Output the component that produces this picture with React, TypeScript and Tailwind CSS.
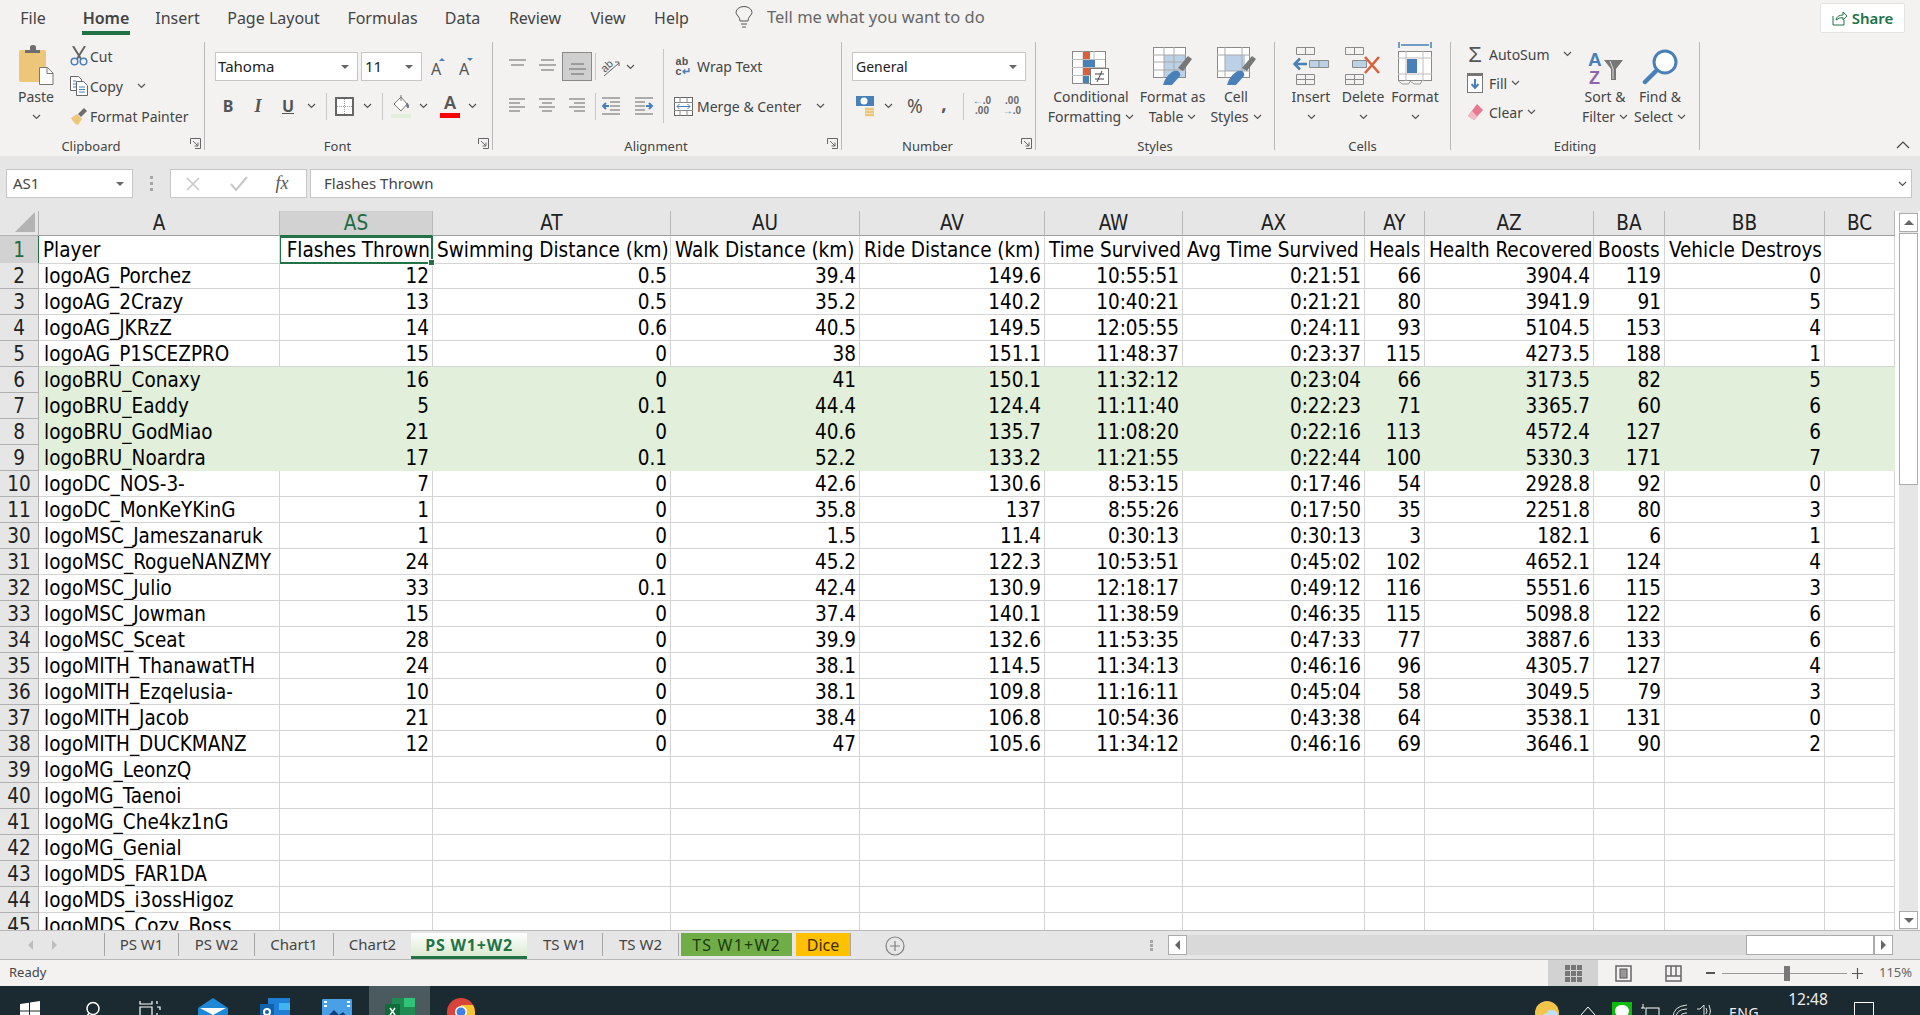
import type { ReactNode } from 'react'

const COL_CLASS = 'grid grid-cols-[39px_241px_153px_238px_189px_185px_138px_182px_60px_169px_71px_160px_70px]'

const HEADERS = ['A', 'AS', 'AT', 'AU', 'AV', 'AW', 'AX', 'AY', 'AZ', 'BA', 'BB', 'BC']
const TITLES = ['Player', 'Flashes Thrown', 'Swimming Distance (km)', 'Walk Distance (km)', 'Ride Distance (km)', 'Time Survived', 'Avg Time Survived', 'Heals', 'Health Recovered', 'Boosts', 'Vehicle Destroys', '']

const ROWS: [number, string, ...string[]][] = [
  [2, 'logoAG_Porchez', '12', '0.5', '39.4', '149.6', '10:55:51', '0:21:51', '66', '3904.4', '119', '0'],
  [3, 'logoAG_2Crazy', '13', '0.5', '35.2', '140.2', '10:40:21', '0:21:21', '80', '3941.9', '91', '5'],
  [4, 'logoAG_JKRzZ', '14', '0.6', '40.5', '149.5', '12:05:55', '0:24:11', '93', '5104.5', '153', '4'],
  [5, 'logoAG_P1SCEZPRO', '15', '0', '38', '151.1', '11:48:37', '0:23:37', '115', '4273.5', '188', '1'],
  [6, 'logoBRU_Conaxy', '16', '0', '41', '150.1', '11:32:12', '0:23:04', '66', '3173.5', '82', '5'],
  [7, 'logoBRU_Eaddy', '5', '0.1', '44.4', '124.4', '11:11:40', '0:22:23', '71', '3365.7', '60', '6'],
  [8, 'logoBRU_GodMiao', '21', '0', '40.6', '135.7', '11:08:20', '0:22:16', '113', '4572.4', '127', '6'],
  [9, 'logoBRU_Noardra', '17', '0.1', '52.2', '133.2', '11:21:55', '0:22:44', '100', '5330.3', '171', '7'],
  [10, 'logoDC_NOS-3-', '7', '0', '42.6', '130.6', '8:53:15', '0:17:46', '54', '2928.8', '92', '0'],
  [11, 'logoDC_MonKeYKinG', '1', '0', '35.8', '137', '8:55:26', '0:17:50', '35', '2251.8', '80', '3'],
  [30, 'logoMSC_Jameszanaruk', '1', '0', '1.5', '11.4', '0:30:13', '0:30:13', '3', '182.1', '6', '1'],
  [31, 'logoMSC_RogueNANZMY', '24', '0', '45.2', '122.3', '10:53:51', '0:45:02', '102', '4652.1', '124', '4'],
  [32, 'logoMSC_Julio', '33', '0.1', '42.4', '130.9', '12:18:17', '0:49:12', '116', '5551.6', '115', '3'],
  [33, 'logoMSC_Jowman', '15', '0', '37.4', '140.1', '11:38:59', '0:46:35', '115', '5098.8', '122', '6'],
  [34, 'logoMSC_Sceat', '28', '0', '39.9', '132.6', '11:53:35', '0:47:33', '77', '3887.6', '133', '6'],
  [35, 'logoMITH_ThanawatTH', '24', '0', '38.1', '114.5', '11:34:13', '0:46:16', '96', '4305.7', '127', '4'],
  [36, 'logoMITH_Ezqelusia-', '10', '0', '38.1', '109.8', '11:16:11', '0:45:04', '58', '3049.5', '79', '3'],
  [37, 'logoMITH_Jacob', '21', '0', '38.4', '106.8', '10:54:36', '0:43:38', '64', '3538.1', '131', '0'],
  [38, 'logoMITH_DUCKMANZ', '12', '0', '47', '105.6', '11:34:12', '0:46:16', '69', '3646.1', '90', '2'],
  [39, 'logoMG_LeonzQ'],
  [40, 'logoMG_Taenoi'],
  [41, 'logoMG_Che4kz1nG'],
  [42, 'logoMG_Genial'],
  [43, 'logoMDS_FAR1DA'],
  [44, 'logoMDS_i3ossHigoz'],
  [45, 'logoMDS_Cozy_Boss'],
]

function Chev({ className = '' }: { className?: string }) {
  return (
    <svg width="9" height="6" viewBox="0 0 9 6" className={`shrink-0 ${className}`} fill="none" stroke="#555" strokeWidth="1.2">
      <path d="M1 1l3.5 3.5L8 1" />
    </svg>
  )
}

function Caret() {
  return <div className="h-0 w-0 border-x-[4px] border-t-[4px] border-x-transparent border-t-[#666]" />
}

function Launcher() {
  return (
    <svg width="11" height="11" viewBox="0 0 11 11" className="absolute bottom-[1px] right-[3px]" fill="none" stroke="#666">
      <path d="M.5 6V.5H10.5V10.5H5" />
      <path d="M3 3l5 5M8 4.5V8H4.5" />
    </svg>
  )
}

function Group({ className, label, launcher, children }: { className: string; label: string; launcher?: boolean; children: ReactNode }) {
  return (
    <div className={`relative flex h-[108px] shrink-0 flex-col border-r border-[#b9b9b9] ${className}`}>
      <div className="flex h-[96px] shrink-0">{children}</div>
      <div className={`h-[16px] shrink-0 text-center text-[13px] leading-[16px] text-[#444] ${launcher ? 'pr-[22px]' : ''}`}>{label}</div>
      {launcher && <Launcher />}
    </div>
  )
}

function BigBtn({ className, icon, lines, chevLine }: { className: string; icon: ReactNode; lines: string[]; chevLine?: boolean }) {
  return (
    <div className={`flex shrink-0 flex-col items-center ${className}`}>
      <div className="flex h-[45px] items-end justify-center pb-[2px]">{icon}</div>
      <div className="h-[20px] whitespace-nowrap leading-[20px]">{lines[0]}</div>
      <div className="flex h-[20px] items-center gap-[4px] whitespace-nowrap leading-[20px]">
        {lines[1] && <span>{lines[1]}</span>}
        {chevLine !== false && <Chev />}
      </div>
    </div>
  )
}

function Sep() {
  return <div className="h-[27px] w-px shrink-0 bg-[#c6c6c6]" />
}

function Slot({ className, children }: { className: string; children: ReactNode }) {
  return <div className={`flex h-full shrink-0 items-center justify-center ${className}`}>{children}</div>
}

function Lines({ kind }: { kind: 'top' | 'mid' | 'bottom' | 'left' | 'center' | 'right' }) {
  const paths: Record<string, string> = {
    top: 'M1 2h17M3 7h13',
    mid: 'M3 2h13M1 7h17M3 12h13',
    bottom: 'M3 6h13M1 11h17M3 16h13',
    left: 'M1 2h16M1 6h11M1 10h16M1 14h11',
    center: 'M1 2h16M4 6h10M1 10h16M4 14h10',
    right: 'M1 2h16M6 6h11M1 10h16M6 14h11',
  }
  return (
    <svg width="19" height="18" viewBox="0 0 19 18" fill="none" stroke="#666" strokeWidth="1">
      <path d={paths[kind]} />
    </svg>
  )
}

function PasteIcon() {
  return (
    <svg width="36" height="40" viewBox="0 0 36 40">
      <rect x="1" y="5" width="27" height="32" rx="2" fill="#edc67a" />
      <path d="M9 5h3V2q0-2 3-2t3 2v3h4v3H7V5z" fill="#6e6e6e" />
      <path d="M21.500 22.500h8l5.500 5.500v11.500H21.500z" fill="#fff" stroke="#777" />
      <path d="M29 22.500v6h6" fill="none" stroke="#777" />
    </svg>
  )
}
function CutIcon() {
  return (
    <svg width="18" height="20" viewBox="0 0 18 20" fill="none">
      <path d="M3 0l8 13M15 0L7 13" stroke="#666" strokeWidth="2" />
      <circle cx="4.500" cy="15.500" r="3.300" stroke="#4a80b8" strokeWidth="1.500" />
      <circle cx="13.500" cy="15.500" r="3.300" stroke="#4a80b8" strokeWidth="1.500" />
    </svg>
  )
}
function CopyIcon() {
  return (
    <svg width="18" height="20" viewBox="0 0 18 20" fill="#fff">
      <path d="M.5.500h8l3 3v11H.500z" stroke="#666" />
      <path d="M6.500 5.500h7l4 4v10h-11z" stroke="#666" />
      <path d="M3 5h3M3 8h3M3 11h3M9 11h6M9 13.500h6M9 16h6" stroke="#4a80b8" fill="none" />
    </svg>
  )
}
function PainterIcon() {
  return (
    <svg width="18" height="18" viewBox="0 0 18 18">
      <path d="M1 11l6-4 5 5-4 6q-4-1-7-7z" fill="#edc67a" />
      <path d="M8 7l6-6 3 3-6 6z" fill="#6e6e6e" />
    </svg>
  )
}
function CfIcon() {
  return (
    <svg width="38" height="34" viewBox="0 0 38 34">
      <rect x=".5" y=".5" width="33" height="32" fill="#fff" stroke="#8a8a8a" />
      <path d="M11 0v33M22 0v33M0 8.500h33M0 16.500h33M0 24.500h33" stroke="#bdbdbd" />
      <rect x="11" y="1" width="7" height="7" fill="#d9603b" />
      <rect x="11" y="9" width="12" height="7" fill="#4a80b8" />
      <rect x="11" y="17" width="9" height="7" fill="#d9603b" />
      <rect x="11" y="25" width="6" height="7" fill="#4a80b8" />
      <rect x="18.500" y="17.500" width="18" height="16" fill="#fff" stroke="#777" />
      <path d="M23 23h9M23 28h9M30 20L25 31" stroke="#444" fill="none" />
    </svg>
  )
}
function TableBrush({ big }: { big?: boolean }) {
  return (
    <svg width="39" height="38" viewBox="0 0 39 38">
      <rect x=".5" y=".5" width="32" height="30" fill="#fff" stroke="#8a8a8a" />
      {big ? (
        <>
          <rect x="8" y="8" width="20" height="16" fill="#bcd0e6" />
          <path d="M8 0v31M25 0v31M0 8h33M0 24h33" stroke="#a9a9a9" />
        </>
      ) : (
        <>
          <rect x="11" y="8" width="21" height="22" fill="#bcd0e6" />
          <path d="M11 0v31M21 0v31M0 8h33M0 15h33M0 23h33" stroke="#a9a9a9" />
        </>
      )}
      <path d="M25 21l10-12 4 3-9 12z" fill="#777" />
      <path d="M10 38q2-8 9-13 3-2 6-1 3 2 2 5l-8 9z" fill="#4a80b8" />
    </svg>
  )
}
function InsertIcon() {
  return (
    <svg width="36" height="38" viewBox="0 0 36 38" fill="none" stroke="#8a8a8a">
      <path d="M3.500.500h18v7h-18zM12.500.500v7M3.500 27.500h18v10h-18zM12.500 27.500v10M3.500 32.500h18" />
      <path d="M16.500 13.500h19v7h-19zM26 13.500v7" fill="#bcd0e6" />
      <path d="M14 17H2M7 11.500L1.500 17 7 22.500" stroke="#4a80b8" strokeWidth="2.500" />
    </svg>
  )
}
function DeleteIcon() {
  return (
    <svg width="36" height="38" viewBox="0 0 36 38" fill="none" stroke="#8a8a8a">
      <path d="M.5.500h18v7h-18zM9.500.500v7M.5 27.500h18v10h-18zM9.500 27.500v10M.5 32.500h18" />
      <path d="M7.500 13.500h14v7h-14z" fill="#bcd0e6" />
      <path d="M20 10l14 16M34 10L20 26" stroke="#d9603b" strokeWidth="2.500" />
    </svg>
  )
}
function FormatIcon() {
  return (
    <svg width="34" height="44" viewBox="0 0 34 44" fill="none">
      <path d="M1 1v6M33 1v6M3 4h28" stroke="#4a80b8" strokeWidth="1.500" />
      <rect x=".5" y="10.500" width="33" height="29" fill="#fff" stroke="#8a8a8a" />
      <path d="M8 10v30M25 10v30M0 17h34M0 33h34" stroke="#bdbdbd" />
      <rect x="9" y="18" width="10" height="14" fill="#4a80b8" />
      <path d="M.5 40l4 3h6l2-3M12 40l4 3h6l2-3" stroke="#999" />
    </svg>
  )
}
function SortIcon() {
  return (
    <svg width="35" height="34" viewBox="0 0 35 34">
      <text x="0" y="15" fontFamily="'Liberation Sans', sans-serif" fontSize="19" fontWeight="700" fill="#4a80b8">A</text>
      <text x="1" y="33" fontFamily="'Liberation Sans', sans-serif" fontSize="18" fontWeight="700" fill="#8e63b0">Z</text>
      <path d="M16 9h19l-7 9v11h-5V18z" fill="#777" />
      <path d="M22 10l3 8v10" stroke="#ddd" fill="none" />
    </svg>
  )
}
function FindIcon() {
  return (
    <svg width="37" height="36" viewBox="0 0 37 36" fill="none">
      <circle cx="23" cy="13" r="11" fill="#fff" stroke="#4a80b8" strokeWidth="3" />
      <path d="M14 22L3 33" stroke="#4a80b8" strokeWidth="4.500" strokeLinecap="round" />
    </svg>
  )
}

function Ribbon() {
  return (
    <div className="flex h-[114px] shrink-0 items-start bg-[#f3f2f1] text-[14px] text-[#444]">
      <Group className="w-[205px]" label="Clipboard" launcher>
        <BigBtn className="ml-[4px] w-[64px]" icon={<PasteIcon />} lines={['Paste', '']} />
        <div className="-mt-[1px] flex w-[130px] flex-col">
          {[
            ['Cut', <CutIcon key="c" />],
            ['Copy', <CopyIcon key="o" />],
            ['Format Painter', <PainterIcon key="p" />],
          ].map(([label, icon], i) => (
            <div key={i} className="flex h-[30px] items-center whitespace-nowrap">
              <div className="flex w-[22px] justify-center">{icon}</div>
              <span>{label}</span>
              {i === 1 && <Chev className="ml-[14px]" />}
            </div>
          ))}
        </div>
      </Group>
      <Group className="w-[288px]" label="Font" launcher>
        <div className="flex flex-col pt-[10px]">
          <div className="flex h-[29px]">
            <div className="ml-[10px] flex w-[143px] items-center justify-between border border-[#c6c6c6] bg-white pl-[2px] pr-[8px] text-[15px] text-[#222]">
              Tahoma <Caret />
            </div>
            <div className="ml-[3px] flex w-[61px] items-center justify-between border border-[#c6c6c6] bg-white pl-[3px] pr-[8px] text-[15px] text-[#222]">
              11 <Caret />
            </div>
            <Slot className="ml-[3px] w-[28px]">
              <svg width="16" height="18" viewBox="0 0 16 18"><text x="0" y="17" fontSize="16" fill="#555" fontFamily="'Noto Sans', sans-serif">A</text><path d="M8 3l3-3 3 3z" fill="#4a80b8" /></svg>
            </Slot>
            <Slot className="w-[28px]">
              <svg width="16" height="18" viewBox="0 0 16 18"><text x="0" y="17" fontSize="16" fill="#555" fontFamily="'Noto Sans', sans-serif">A</text><path d="M8 0l3 3 3-3z" fill="#4a80b8" /></svg>
            </Slot>
          </div>
          <div className="mt-[10px] flex h-[30px] items-center">
            <Slot className="ml-[8px] w-[30px] text-[16px] font-bold text-[#555]">B</Slot>
            <Slot className="w-[30px] font-['Liberation_Serif'] text-[18px] font-bold italic text-[#555]">I</Slot>
            <Slot className="w-[30px] text-[16px] font-bold text-[#555] underline">U</Slot>
            <Slot className="w-[16px]"><Chev /></Slot>
            <div className="ml-[7px]"><Sep /></div>
            <Slot className="ml-[8px] w-[19px]">
              <svg width="19" height="19" viewBox="0 0 19 19" fill="#fff"><rect x="1" y="1" width="17" height="17" stroke="#666" strokeWidth="2" /><path d="M9.500 2v15M2 9.500h15" stroke="#999" strokeDasharray="1 1" /></svg>
            </Slot>
            <Slot className="ml-[4px] w-[18px]"><Chev /></Slot>
            <div className="ml-[6px]"><Sep /></div>
            <Slot className="ml-[8px] w-[20px]">
              <svg width="20" height="23" viewBox="0 0 20 23" fill="none"><path d="M3 9l7-7 6 7-6 7z" fill="#fff" stroke="#777" /><path d="M16 8q3 3 1 5-2-1-1-5zM10 0v6" stroke="#777" fill="#4a80b8" /><rect y="19" width="20" height="4" fill="#e2efda" /></svg>
            </Slot>
            <Slot className="ml-[3px] w-[18px]"><Chev /></Slot>
            <Slot className="ml-[8px] w-[20px]">
              <div className="flex flex-col items-center">
                <span className="text-[18px] font-semibold leading-[17px] text-[#555]">A</span>
                <div className="mt-[2px] h-[5px] w-[20px] bg-[#ff0000]" />
              </div>
            </Slot>
            <Slot className="ml-[3px] w-[18px]"><Chev /></Slot>
          </div>
        </div>
      </Group>
      <Group className="w-[349px]" label="Alignment" launcher>
        <div className="flex w-[170px] shrink-0 flex-col pt-[10px]">
          <div className="flex h-[29px] items-center pl-[9px]">
            <Slot className="w-[30px]"><Lines kind="top" /></Slot>
            <Slot className="w-[30px]"><Lines kind="mid" /></Slot>
            <Slot className="w-[30px] border border-[#8a8a8a] bg-[#cfcfcf]"><Lines kind="bottom" /></Slot>
            <div className="ml-[3px]"><Sep /></div>
            <Slot className="w-[30px]">
              <svg width="22" height="22" viewBox="0 0 22 22" fill="none" stroke="#666">
                <text x="1" y="13" fontSize="11" fontFamily="'Liberation Sans', sans-serif" fill="#555" stroke="none" transform="rotate(-42 8 10)">ab</text>
                <path d="M4 20L19 7M15 6h4v4" />
              </svg>
            </Slot>
            <Slot className="w-[8px]"><Chev /></Slot>
          </div>
          <div className="mt-[10px] flex h-[30px] items-center pl-[9px]">
            <Slot className="w-[30px]"><Lines kind="left" /></Slot>
            <Slot className="w-[30px]"><Lines kind="center" /></Slot>
            <Slot className="w-[30px]"><Lines kind="right" /></Slot>
            <div className="ml-[3px]"><Sep /></div>
            <Slot className="w-[30px]">
              <svg width="20" height="18" viewBox="0 0 20 18" fill="none"><path d="M1 1h18M9 5h10M9 9h10M9 13h10M1 17h18" stroke="#666" /><path d="M8 9H2M5 6L2 9l3 3" stroke="#4a80b8" strokeWidth="2" /></svg>
            </Slot>
            <Slot className="ml-[3px] w-[30px]">
              <svg width="20" height="18" viewBox="0 0 20 18" fill="none"><path d="M1 1h18M1 5h10M1 9h10M1 13h10M1 17h18" stroke="#666" /><path d="M12 9h6M15 6l3 3-3 3" stroke="#4a80b8" strokeWidth="2" /></svg>
            </Slot>
          </div>
        </div>
        <div className="mt-[7px] h-[74px] w-px shrink-0 bg-[#c6c6c6]" />
        <div className="flex flex-1 flex-col pt-[10px]">
          <div className="flex h-[29px] items-center">
            <Slot className="ml-[9px] w-[20px]">
              <span className="font-['Liberation_Mono'] text-[11px] font-bold leading-[10px] text-[#555]">ab<br />c<span className="text-[#4a80b8]">↵</span></span>
            </Slot>
            <span className="ml-[4px]">Wrap Text</span>
          </div>
          <div className="mt-[10px] flex h-[30px] items-center">
            <Slot className="ml-[9px] w-[20px]">
              <svg width="19" height="19" viewBox="0 0 19 19" fill="#fff"><rect x=".5" y=".5" width="18" height="18" stroke="#666" /><path d="M0 5.500h19M0 13.500h19M6 0v5M13 0v5M6 14v5M13 14v5" stroke="#888" /><path d="M3 9.500h13M5.500 7L3 9.500 5.500 12M13.500 7L16 9.500 13.500 12" stroke="#4a80b8" fill="none" /></svg>
            </Slot>
            <span className="ml-[4px] whitespace-nowrap">Merge &amp; Center</span>
            <Chev className="ml-[15px]" />
          </div>
        </div>
      </Group>
      <Group className="w-[194px]" label="Number" launcher>
        <div className="flex flex-col pt-[10px]">
          <div className="flex h-[29px]">
            <div className="ml-[10px] flex w-[174px] items-center justify-between border border-[#c6c6c6] bg-white pl-[3px] pr-[8px] text-[14px] text-[#222]">
              General <Caret />
            </div>
          </div>
          <div className="mt-[10px] flex h-[30px] items-center">
            <Slot className="ml-[14px] w-[19px]">
              <svg width="19" height="22" viewBox="0 0 19 22"><rect y="1" width="18" height="10" fill="#4a80b8" /><ellipse cx="8" cy="6" rx="3.500" ry="3.500" fill="#fff" /><path d="M9 14h9M9 17h9M9 20h9" stroke="#edc67a" strokeWidth="2.500" /></svg>
            </Slot>
            <Slot className="ml-[5px] w-[16px]"><Chev /></Slot>
            <Slot className="ml-[4px] w-[30px] text-[19px] text-[#555]">%</Slot>
            <Slot className="w-[28px] pb-[6px] text-[19px] font-bold text-[#555]">,</Slot>
            <div className="ml-[5px]"><Sep /></div>
            <Slot className="ml-[3px] w-[30px]">
              <div className="flex flex-col items-center font-['Liberation_Sans'] text-[10px] font-bold leading-[10px] text-[#666]"><span><span className="text-[#4a80b8]">←</span>.0</span><span>.00</span></div>
            </Slot>
            <Slot className="w-[30px]">
              <div className="flex flex-col items-center font-['Liberation_Sans'] text-[10px] font-bold leading-[10px] text-[#666]"><span>.00</span><span><span className="text-[#4a80b8]">→</span>.0</span></div>
            </Slot>
          </div>
        </div>
      </Group>
      <Group className="w-[239px]" label="Styles">
        <BigBtn className="ml-[12px] w-[86px]" icon={<CfIcon />} lines={['Conditional', 'Formatting']} />
        <BigBtn className="ml-[5px] w-[67px]" icon={<TableBrush />} lines={['Format as', 'Table']} />
        <BigBtn className="w-[60px]" icon={<TableBrush big />} lines={['Cell', 'Styles']} />
      </Group>
      <Group className="w-[176px]" label="Cells">
        <BigBtn className="ml-[10px] w-[52px]" icon={<InsertIcon />} lines={['Insert', '']} />
        <BigBtn className="w-[52px]" icon={<DeleteIcon />} lines={['Delete', '']} />
        <BigBtn className="w-[52px]" icon={<FormatIcon />} lines={['Format', '']} />
      </Group>
      <Group className="w-[249px]" label="Editing">
        <div className="flex w-[132px] shrink-0 flex-col">
          <div className="flex h-[24px] items-center">
            <Slot className="ml-[16px] w-[16px] font-['Liberation_Sans'] text-[22px] text-[#555]">Σ</Slot>
            <span className="ml-[6px]">AutoSum</span>
            <Chev className="ml-[13px]" />
          </div>
          <div className="mt-[2px] flex h-[30px] items-center">
            <Slot className="ml-[16px] w-[16px]">
              <svg width="16" height="20" viewBox="0 0 16 20" fill="#fff"><rect x=".5" y=".5" width="15" height="19" stroke="#777" /><rect width="16" height="3" fill="#777" /><path d="M8 6v9M4.500 11L8 15l3.500-4" stroke="#4a80b8" strokeWidth="2" fill="none" /></svg>
            </Slot>
            <span className="ml-[6px]">Fill</span>
            <Chev className="ml-[4px]" />
          </div>
          <div className="flex h-[28px] items-center">
            <Slot className="ml-[16px] w-[16px]">
              <svg width="16" height="16" viewBox="0 0 16 16"><path d="M10 0l6 6-9 10-6-4z" fill="#e8788e" /><path d="M1 12l4-5 5 5-3 4z" fill="#f3b9c4" /></svg>
            </Slot>
            <span className="ml-[6px]">Clear</span>
            <Chev className="ml-[4px]" />
          </div>
        </div>
        <BigBtn className="w-[44px]" icon={<SortIcon />} lines={['Sort &', 'Filter']} />
        <BigBtn className="ml-[4px] w-[58px]" icon={<FindIcon />} lines={['Find &', 'Select']} />
      </Group>
      <div className="flex h-[108px] flex-1 items-end justify-end pb-[1px] pr-[10px]">
        <svg width="14" height="8" viewBox="0 0 14 8" fill="none" stroke="#444" strokeWidth="1.200"><path d="M1 7l6-6 6 6" /></svg>
      </div>
    </div>
  )
}

function TitleTabs() {
  const tabs: [string, string][] = [
    ['File', 'w-[66px]'],
    ['Home', 'w-[80px]'],
    ['Insert', 'w-[63px]'],
    ['Page Layout', 'w-[129px]'],
    ['Formulas', 'w-[89px]'],
    ['Data', 'w-[71px]'],
    ['Review', 'w-[74px]'],
    ['View', 'w-[72px]'],
    ['Help', 'w-[55px]'],
  ]
  return (
    <div className="flex h-[42px] shrink-0 bg-[#f3f2f1] text-[16px] text-[#444]">
      {tabs.map(([name, w]) => (
        <div key={name} className={`flex h-[35px] shrink-0 justify-center ${w}`}>
          {name === 'Home' ? (
            <div className="flex h-[35px] w-[48px] items-center justify-center whitespace-nowrap border-b-4 border-[#217346] pt-[4px] font-semibold">{name}</div>
          ) : (
            <div className="flex h-[35px] items-center whitespace-nowrap">{name}</div>
          )}
        </div>
      ))}
      <div className="ml-[36px] flex h-[35px] w-[32px] shrink-0 items-center">
        <svg width="18" height="23" viewBox="0 0 18 23" fill="none" stroke="#555"><path d="M5 15q0-3-2-5Q1 8 1 6.500a8 6 0 0116 0Q17 8 15 10q-2 2-2 5zM6 18h6M7 21h4" /></svg>
      </div>
      <div className="flex h-[35px] shrink-0 items-center text-[16.5px] text-[#666]">Tell me what you want to do</div>
      <div className="ml-auto mr-[15px] mt-[3px] flex h-[30px] w-[85px] items-center justify-center gap-[5px] rounded-[2px] border border-[#e2e2e2] bg-white text-[15px] font-semibold text-[#217346]">
        <svg width="15" height="16" viewBox="0 0 15 16" fill="none" stroke="#217346"><path d="M1 6v9h11v-5M4 10q1-5 7-5V2l4 4-4 4V7.500q-4 0-7 2.500z" /></svg>
        Share
      </div>
    </div>
  )
}

function FormulaBar() {
  return (
    <div className="flex h-[55px] shrink-0 bg-[#e6e6e6] pt-[13px] text-[15px] text-[#444]">
      <div className="ml-[6px] flex h-[29px] w-[127px] shrink-0 items-center justify-between border border-[#c6c6c6] bg-white pl-[6px] pr-[8px]">
        AS1 <Caret />
      </div>
      <div className="ml-[15px] flex h-[29px] w-[7px] shrink-0 flex-col items-center justify-center gap-[3px]">
        <div className="h-[3px] w-[3px] bg-[#a6a6a6]" />
        <div className="h-[3px] w-[3px] bg-[#a6a6a6]" />
        <div className="h-[3px] w-[3px] bg-[#a6a6a6]" />
      </div>
      <div className="ml-[15px] flex h-[29px] w-[137px] shrink-0 items-center border border-[#c6c6c6] bg-white">
        <Slot className="ml-[4px] w-[36px]">
          <svg width="16" height="16" viewBox="0 0 16 16" stroke="#c6c6c6" strokeWidth="1.500"><path d="M2 2l12 12M14 2L2 14" /></svg>
        </Slot>
        <Slot className="ml-[10px] w-[36px]">
          <svg width="18" height="16" viewBox="0 0 18 16" fill="none" stroke="#c6c6c6" strokeWidth="2"><path d="M1 8l5 6L17 1" /></svg>
        </Slot>
        <Slot className="ml-[7px] w-[36px] font-['Liberation_Serif'] text-[18px] italic text-[#555]">fx</Slot>
      </div>
      <div className="ml-[3px] flex h-[29px] flex-1 items-center justify-between border border-[#c6c6c6] bg-white pl-[13px] pr-[4px]">
        Flashes Thrown
        <Chev />
      </div>
      <div className="w-[8px] shrink-0" />
    </div>
  )
}

function Sheet() {
  return (
    <div className="flex h-[719px] shrink-0 items-start bg-white font-['DejaVu_Sans_Condensed','Liberation_Sans',sans-serif] text-[20.5px] leading-[24px] text-black">
      <div className="relative h-[719px] w-[1895px] shrink-0 overflow-hidden">
        <div className={`${COL_CLASS} h-[25px] bg-[#e6e6e6] text-[#222]`}>
          <div className="relative border-b border-r border-[#b1b1b1]">
            <div className="absolute bottom-[3px] right-[3px] h-0 w-0 border-b-[20px] border-l-[20px] border-b-[#b4b4b4] border-l-transparent" />
          </div>
          {HEADERS.map((h) => (
            <div
              key={h}
              className={`flex items-center justify-center border-r border-[#b9b9b9] ${
                h === 'AS' ? 'border-b border-b-[#217346] bg-[#d2d2d2] text-[#1e6b42]' : 'border-b border-b-[#9f9f9f]'
              }`}
            >
              {h}
            </div>
          ))}
        </div>
        <div className={`${COL_CLASS} h-[27px]`}>
          <div className="flex items-center justify-center border-b border-r border-[#217346] border-b-[#b1b1b1] bg-[#d2d2d2] text-[#1e6b42]">1</div>
          {TITLES.map((t, i) => (
            <div
              key={i}
              className={`relative flex items-center overflow-visible whitespace-nowrap pl-[4px] ${
                i === 1 ? 'z-10 justify-end border-y-2 border-l border-r-2 border-[#217346] pr-[1px]' : 'border-b border-r border-[#d4d4d4]'
              }`}
            >
              {t}
              {i === 1 && <div className="absolute bottom-[-4px] right-[-4px] h-[7px] w-[7px] border border-white bg-[#217346]" />}
            </div>
          ))}
        </div>
        {ROWS.map(([num, name, ...vals]) => {
          const green = num >= 6 && num <= 9
          const line = green ? 'border-[#e2efda] bg-[#e2efda]' : 'border-[#d4d4d4]'
          return (
            <div key={num} className={`${COL_CLASS} h-[26px]`}>
              <div className="flex items-center justify-center border-b border-r border-[#b1b1b1] bg-[#e6e6e6] text-[#222]">{num}</div>
              <div className={`flex items-center overflow-hidden whitespace-nowrap border-b border-r pl-[5px] ${line}`}>{name}</div>
              {Array.from({ length: 11 }).map((_, i) => (
                <div key={i} className={`flex items-center justify-end whitespace-nowrap border-b border-r pr-[3px] ${line}`}>
                  {vals[i] ?? ''}
                </div>
              ))}
            </div>
          )
        })}
      </div>
      <div className="ml-[4px] flex h-[719px] w-[19px] shrink-0 flex-col bg-[#e6e6e6] pt-[2px]">
        <div className="flex h-[19px] items-center justify-center border border-[#ababab] bg-white">
          <div className="h-0 w-0 border-x-[5px] border-b-[5px] border-x-transparent border-b-[#666]" />
        </div>
        <div className="mt-[1px] h-[252px] border border-[#ababab] bg-white" />
        <div className="flex-1" />
        <div className="mb-[1px] flex h-[18px] items-center justify-center border border-[#ababab] bg-white">
          <div className="h-0 w-0 border-x-[5px] border-t-[5px] border-x-transparent border-t-[#666]" />
        </div>
      </div>
    </div>
  )
}

function Tab({ className, children }: { className: string; children: ReactNode }) {
  return <div className={`flex h-[23px] shrink-0 items-center justify-center border-r border-[#a6a6a6] ${className}`}>{children}</div>
}

function SheetTabs() {
  return (
    <div className="flex h-[30px] shrink-0 border-y border-[#b9b9b9] bg-[#e6e6e6] text-[15px] text-[#444]">
      <div className="flex h-full w-[104px] shrink-0 items-center pl-[28px]">
        <svg width="30" height="12" viewBox="0 0 30 12" fill="#bdbdbd"><path d="M5 1L0 6l5 5zM24 1l5 5-5 5z" /></svg>
      </div>
      <div className="mt-[2px] flex">
        <Tab className="w-[75px] border-l border-l-[#a6a6a6]">PS W1</Tab>
        <Tab className="w-[76px]">PS W2</Tab>
        <Tab className="w-[79px]">Chart1</Tab>
        <div className="flex h-[23px] w-[77px] shrink-0 items-center justify-center">Chart2</div>
        <div className="flex h-[26px] w-[116px] shrink-0 items-center justify-center whitespace-nowrap border-b-[3px] border-[#217346] bg-gradient-to-b from-white to-[#dbe9d2] text-[16px] font-bold tracking-[0.8px] text-[#217346]">PS W1+W2</div>
        <Tab className="w-[76px]">TS W1</Tab>
        <Tab className="w-[76px]">TS W2</Tab>
        <div className="ml-[2px] flex h-[23px] w-[111px] shrink-0 items-center justify-center whitespace-nowrap bg-[#70ad47] text-[16px] tracking-[1.2px] text-[#1c3a12]">TS W1+W2</div>
        <div className="ml-[4px] flex h-[23px] w-[54px] shrink-0 items-center justify-center bg-[#ffc000] text-[16px] text-[#3c2f00]">Dice</div>
        <div className="flex h-[23px] w-px bg-[#a6a6a6]" />
      </div>
      <div className="ml-[34px] mt-[5px] h-[20px] w-[20px] shrink-0">
        <svg width="20" height="20" viewBox="0 0 20 20" fill="none" stroke="#808080" strokeWidth="1.200"><circle cx="10" cy="10" r="9" /><path d="M10 5v10M5 10h10" /></svg>
      </div>
      <div className="ml-[245px] mt-[9px] flex h-[11px] w-[4px] shrink-0 flex-col justify-between">
        <div className="h-[3px] w-[3px] bg-[#a6a6a6]" />
        <div className="h-[3px] w-[3px] bg-[#a6a6a6]" />
        <div className="h-[3px] w-[3px] bg-[#a6a6a6]" />
      </div>
      <div className="ml-[14px] mt-[4px] flex h-[20px] w-[725px] shrink-0 bg-[#d9d9d9]">
        <div className="flex w-[19px] items-center justify-center border border-[#ababab] bg-white">
          <div className="h-0 w-0 border-y-[5px] border-r-[5px] border-y-transparent border-r-[#666]" />
        </div>
        <div className="flex-1" />
        <div className="w-[128px] border border-[#ababab] bg-white" />
        <div className="flex w-[19px] items-center justify-center border border-[#ababab] bg-white">
          <div className="h-0 w-0 border-y-[5px] border-l-[5px] border-y-transparent border-l-[#666]" />
        </div>
      </div>
    </div>
  )
}

function StatusBar() {
  return (
    <div className="flex h-[26px] shrink-0 items-center bg-[#f3f2f1] text-[13px] text-[#444]">
      <span className="ml-[9px]">Ready</span>
      <div className="ml-auto flex h-full w-[50px] items-center justify-center bg-[#d2d2d2]">
        <svg width="17" height="17" viewBox="0 0 17 17" fill="#777"><path d="M0 0h5v5H0zM6 0h5v5H6zM12 0h5v5h-5zM0 6h5v5H0zM6 6h5v5H6zM12 6h5v5h-5zM0 12h5v5H0zM6 12h5v5H6zM12 12h5v5h-5z" /></svg>
      </div>
      <div className="flex h-full w-[50px] items-center justify-center">
        <svg width="17" height="17" viewBox="0 0 17 17" fill="none" stroke="#666" strokeWidth="1.500"><rect x="1" y="1" width="15" height="15" /><rect x="5" y="4" width="7" height="9" fill="#999" stroke="#555" strokeWidth="1" /></svg>
      </div>
      <div className="flex h-full w-[50px] items-center justify-center">
        <svg width="17" height="17" viewBox="0 0 17 17" fill="none" stroke="#666" strokeWidth="1.500"><path d="M1 1h15v15H1zM1 11h15M6 1v10M11 1v10" /></svg>
      </div>
      <span className="ml-[8px] h-[2px] w-[9px] bg-[#555]" />
      <div className="relative ml-[7px] h-px w-[125px] bg-[#999]">
        <div className="absolute left-[62px] top-[-7px] h-[15px] w-[6px] bg-[#777]" />
      </div>
      <svg width="11" height="11" viewBox="0 0 11 11" className="ml-[5px]" stroke="#555" strokeWidth="1.200"><path d="M0 5.500h11M5.500 0v11" /></svg>
      <span className="ml-[16px] mr-[9px] w-[32px] whitespace-nowrap text-[#666]">115%</span>
    </div>
  )
}

function Taskbar() {
  return (
    <div className="flex h-[29px] shrink-0 overflow-hidden bg-[#1b2a30] text-white">
      <div className="ml-[20px] mt-[15px] shrink-0">
        <svg width="20" height="20" viewBox="0 0 20 20" fill="#fff"><path d="M0 3l9-1.300V9.500H0zM10 1.500L20 0v9.500H10zM0 10.500h9v8L0 17zM10 10.500h10V20l-10-1.500z" /></svg>
      </div>
      <div className="ml-[45px] mt-[15px] shrink-0">
        <svg width="16" height="20" viewBox="0 0 16 20" fill="none" stroke="#fff" strokeWidth="1.500"><circle cx="8" cy="7.500" r="6" /><path d="M4 12l-3 5" /></svg>
      </div>
      <div className="ml-[38px] mt-[15px] shrink-0">
        <svg width="22" height="20" viewBox="0 0 22 20" fill="none" stroke="#fff" strokeWidth="1.200"><path d="M1 0v3h12V0M1 6h12v9H1zM18 0v3M18 6h3v3M18 12v3" /></svg>
      </div>
      <div className="ml-[37px] mt-[12px] shrink-0">
        <svg width="30" height="20" viewBox="0 0 30 20"><path d="M15 0L0 10v10h30V10z" fill="#1e88d8" /><path d="M2 10h26L15 17z" fill="#fff" /></svg>
      </div>
      <div className="ml-[32px] mt-[11px] shrink-0">
        <svg width="30" height="20" viewBox="0 0 30 20"><rect x="8" y="1" width="22" height="19" fill="#1f7fd4" /><rect x="19" y="6" width="11" height="7" fill="#40b4f0" /><rect width="14" height="16" y="7" fill="#0f62ac" /><circle cx="7" cy="15" r="3" fill="none" stroke="#fff" strokeWidth="2" /></svg>
      </div>
      <div className="ml-[32px] mt-[13px] shrink-0">
        <svg width="30" height="20" viewBox="0 0 30 20"><rect width="30" height="20" rx="1" fill="#4aa0e6" /><path d="M3 20l9-9 5 5 4-3 6 7z" fill="#123e7a" /><path d="M2 3h3M2 7h3M25 3h3M25 7h3" stroke="#fff" strokeWidth="2" /></svg>
      </div>
      <div className="ml-[17px] flex w-[61px] shrink-0 justify-center bg-[#4a5a5e] pt-[11px]">
        <svg width="30" height="20" viewBox="0 0 30 20"><rect x="7" y="1" width="23" height="19" fill="#1f8a52" /><rect x="19" y="1" width="11" height="9" fill="#2fc47a" /><rect y="7" width="15" height="13" fill="#0f6b3a" /><path d="M5 11l5 7M10 11l-5 7" stroke="#fff" strokeWidth="1.500" /></svg>
      </div>
      <div className="ml-[17px] mt-[12px] shrink-0">
        <svg width="28" height="28" viewBox="0 0 28 28"><circle cx="14" cy="14" r="14" fill="#d9443a" /><path d="M14 14L1.500 21A14 14 0 0014 28z" fill="#2b9a4a" /><path d="M14 14l12.500 7A14 14 0 0028 14 14 14 0 0026 7H14z" fill="#f7c52e" /><circle cx="14" cy="14" r="6" fill="#fff" /><circle cx="14" cy="14" r="4.500" fill="#3f82e4" /></svg>
      </div>
      <div className="ml-[1060px] mt-[15px] shrink-0">
        <svg width="25" height="20" viewBox="0 0 25 20"><circle cx="12" cy="12" r="12" fill="#f3c44a" /><path d="M6 20q-1-7 6-8 1-4 6-3 5 1 5 6 1 3 0 5z" fill="#bfe0f5" /></svg>
      </div>
      <div className="ml-[20px] mt-[20px] shrink-0">
        <svg width="16" height="10" viewBox="0 0 16 10" fill="none" stroke="#fff"><path d="M1 9l7-8 7 8" /></svg>
      </div>
      <div className="ml-[16px] mt-[16px] h-[20px] w-[20px] shrink-0 bg-[#0dbb0d] p-[3px]">
        <div className="h-[12px] w-[14px] rounded-full bg-white" />
      </div>
      <div className="ml-[8px] mt-[18px] shrink-0">
        <svg width="20" height="16" viewBox="0 0 20 16" fill="none" stroke="#fff"><rect x="6" y="4" width="13" height="12" fill="#1b2a30" /><path d="M1 4h4M3 0v4" /></svg>
      </div>
      <div className="ml-[12px] mt-[18px] shrink-0">
        <svg width="16" height="14" viewBox="0 0 16 14" fill="none" stroke="#ddd"><path d="M1 14q0-12 14-13M4 14q0-9 11-9M8 14q0-5 7-5" /></svg>
      </div>
      <div className="ml-[8px] mt-[17px] shrink-0">
        <svg width="20" height="16" viewBox="0 0 20 16" fill="none" stroke="#ddd"><path d="M1 6h3l4-4v14M10 5q2 3 0 6M13 2q3 6 0 12" /></svg>
      </div>
      <div className="ml-[13px] mt-[19px] w-[30px] shrink-0 text-[14px] leading-[16px] tracking-[0.5px] text-[#eee]">ENG</div>
      <div className="ml-[27px] mt-[3px] w-[44px] shrink-0 text-center text-[15.5px] leading-[20px] text-[#eee]">12:48</div>
      <div className="ml-[24px] mt-[16px] h-[20px] w-[20px] shrink-0 border border-white" />
    </div>
  )
}

export default function App() {
  return (
    <div className="flex h-[1015px] w-[1920px] flex-col overflow-hidden bg-[#e6e6e6] font-['Noto_Sans',sans-serif]">
      <TitleTabs />
      <Ribbon />
      <FormulaBar />
      <Sheet />
      <SheetTabs />
      <StatusBar />
      <Taskbar />
    </div>
  )
}
